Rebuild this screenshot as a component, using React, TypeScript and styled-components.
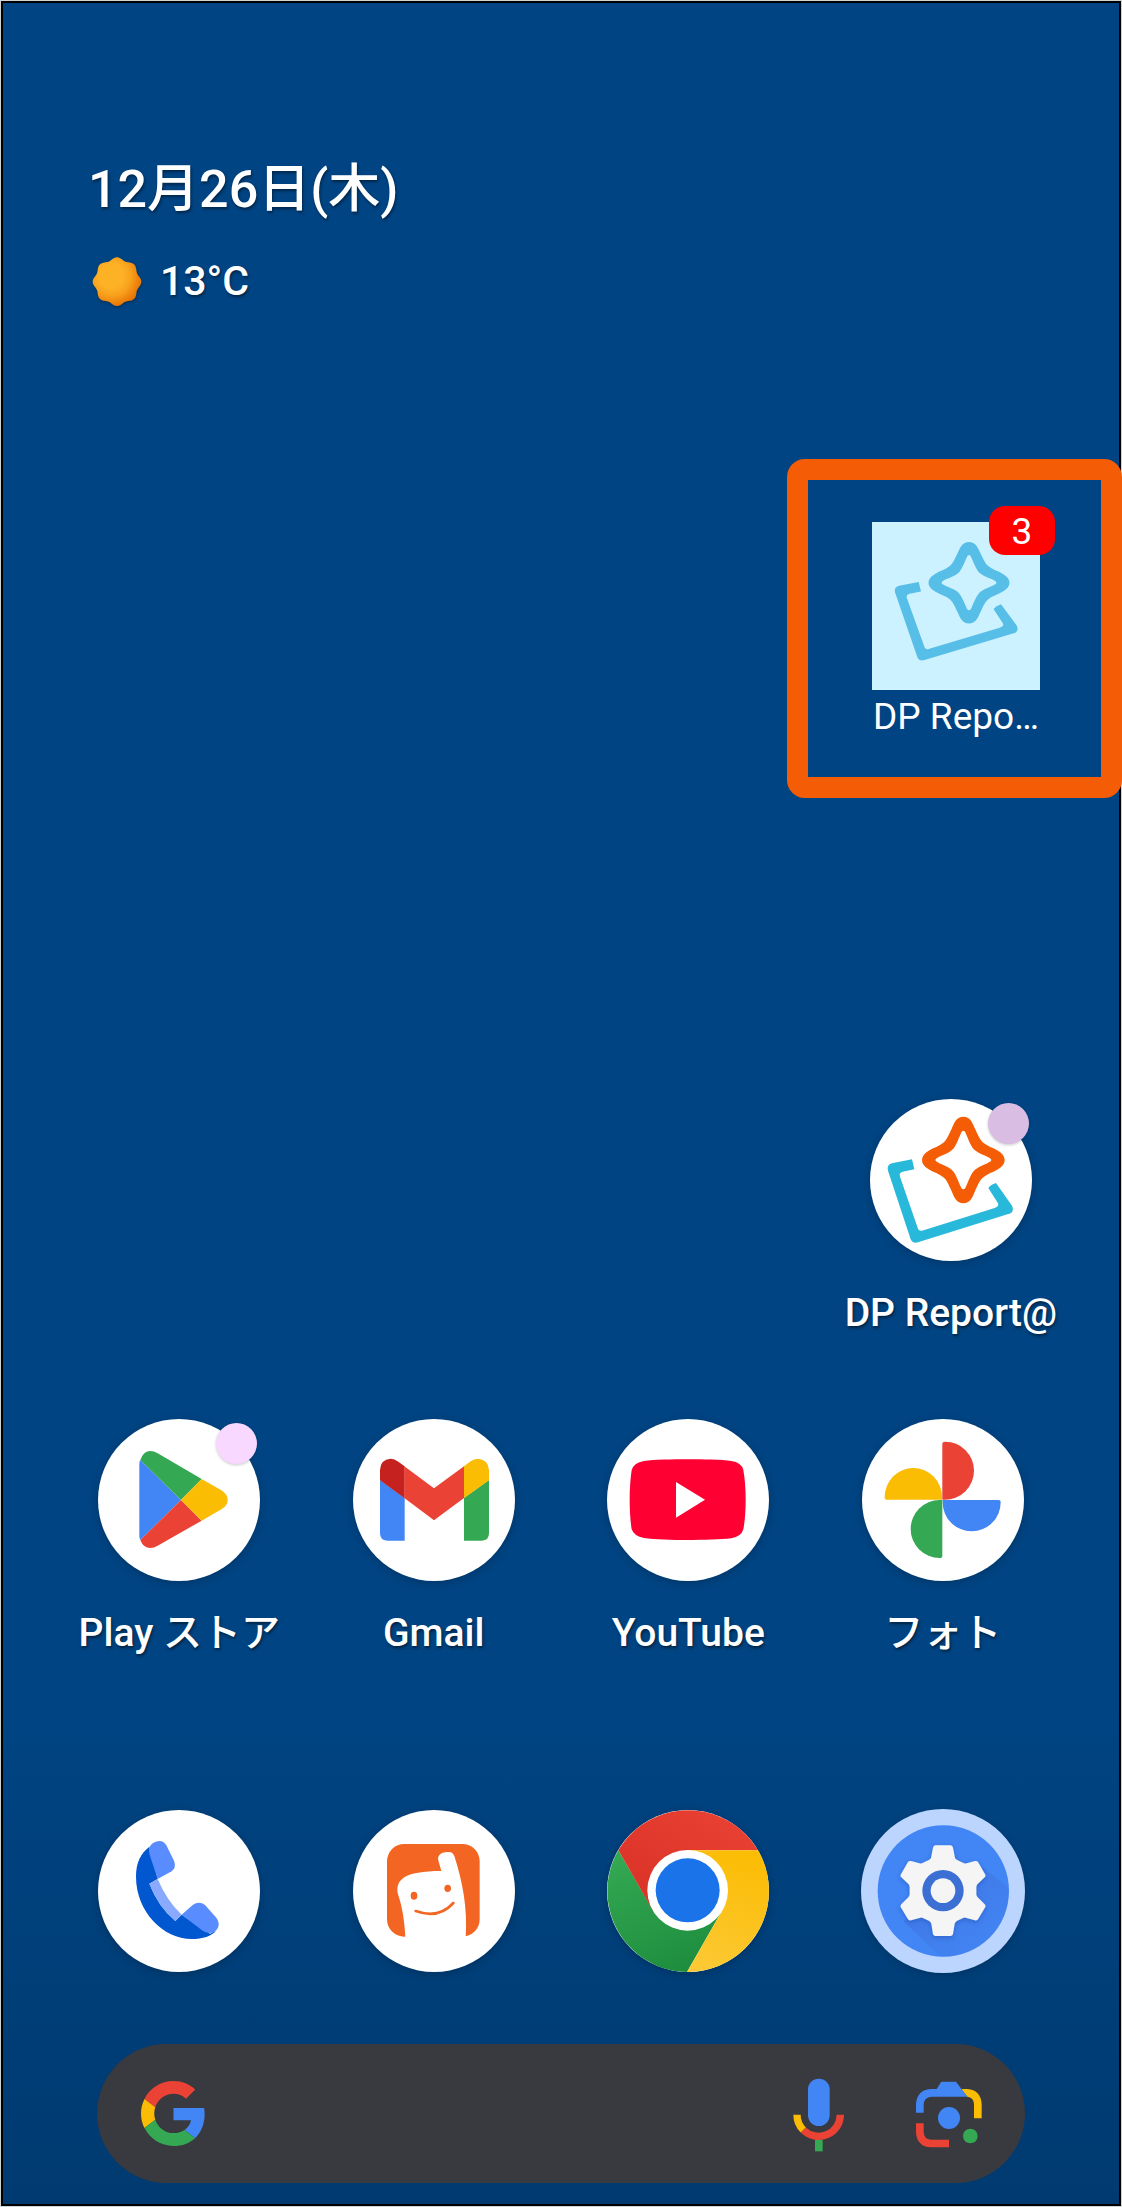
import React from 'react';
import styled, { createGlobalStyle } from 'styled-components';

const ORANGE = '#f45d05';

const GlobalStyle = createGlobalStyle`
  * { box-sizing: border-box; }
  body {
    margin: 0;
    font-family: Roboto, 'Noto Sans CJK JP', sans-serif;
    color: #fff;
  }
  button { border: 0; padding: 0; background: none; font: inherit; color: inherit; cursor: pointer; }
  svg { display: block; overflow: visible; }
`;

const Screen = styled.main`
  display: flex;
  flex-direction: column;
  min-height: 100vh;
  padding: 158px 0 24px;
  background: linear-gradient(#004483 0, #004483 1700px, #003a70 2207px);
  box-shadow: inset 0 0 0 1px #cfd3d1, inset 0 0 0 3px #000;
`;

const Glance = styled.header`
  display: flex;
  flex-direction: column;
  gap: 30px;
  padding: 0 88px;
  font-weight: 500;
  text-shadow: 1px 2px 3px rgba(0, 0, 0, 0.45);
`;

const DateText = styled.time`
  font-size: 52px;
  line-height: 64px;
`;

const Weather = styled.div`
  display: flex;
  align-items: center;
  gap: 16px;
  font-size: 41px;
  line-height: 58px;
`;

const Widget = styled.section`
  display: flex;
  flex-direction: column;
  align-items: center;
  align-self: flex-end;
  width: 335px;
  height: 339px;
  margin-top: 149px;
  padding: 42px 0 0 3px;
  border: 21px solid ${ORANGE};
  border-radius: 18px;
`;

const WidgetButton = styled.button`
  display: flex;
  flex-direction: column;
  gap: 5px;
  width: 168px;
  text-align: center;
`;

const WidgetTile = styled.span`
  position: relative;
  width: 168px;
  height: 168px;
  background: #cdf2ff;
`;

const CountBadge = styled.span`
  position: absolute;
  top: -16px;
  right: -15px;
  width: 66px;
  height: 49px;
  border-radius: 16px;
  background: #f00;
  font-size: 37px;
  line-height: 52px;
  text-align: center;
`;

const WidgetLabel = styled.span`
  font-size: 37px;
  line-height: 44px;
  white-space: nowrap;
`;

const AppRow = styled.div<{ $top: number; $shift?: number }>`
  display: grid;
  grid-template-columns: repeat(4, 1fr);
  justify-items: center;
  margin-top: ${(p) => p.$top}px;
  padding: 0 ${(p) => 52 - (p.$shift ?? 0)}px 0 ${(p) => 52 + (p.$shift ?? 0)}px;
`;

const AppButton = styled.button<{ $column?: number }>`
  display: flex;
  flex-direction: column;
  align-items: center;
  gap: 28px;
  grid-column: ${(p) => p.$column ?? 'auto'};
`;

const Disc = styled.span`
  position: relative;
  width: 162px;
  height: 162px;
  border-radius: 50%;
  background: #fff;
  box-shadow: 0 2px 8px rgba(0, 0, 0, 0.22);
`;

const Dot = styled.span<{ $color: string }>`
  position: absolute;
  top: 4px;
  right: 3px;
  width: 41px;
  height: 41px;
  border-radius: 50%;
  background: ${(p) => p.$color};
  box-shadow: 0 1px 3px rgba(0, 0, 0, 0.22);
`;

const AppLabel = styled.span`
  font-size: 39px;
  font-weight: 500;
  line-height: 48px;
  white-space: nowrap;
  text-shadow: 1px 2px 3px rgba(0, 0, 0, 0.5);
`;

const SearchBar = styled.form`
  display: flex;
  align-items: center;
  gap: 52px;
  height: 139px;
  margin: 72px 97px 0;
  padding: 0 37px 0 44px;
  border-radius: 70px;
  background: #393a3f;
`;

const SearchInput = styled.input`
  flex: 1;
  min-width: 0;
  height: 78px;
  border: 0;
  outline: 0;
  background: none;
  color: #fff;
  font: inherit;
  font-size: 39px;
`;

const STAR_OUTER =
  'M432 110C452 110 459 127 466 144C476 165 482 181 492 188C505 199 520 202 536 212C549 220 556 229 556 240C556 251 549 260 536 268C520 278 505 281 492 292C482 299 476 315 466 336C459 353 452 370 432 370C412 370 405 353 398 336C388 315 382 299 372 292C359 281 344 278 328 268C315 260 308 251 308 240C308 229 315 220 328 212C344 202 359 199 372 188C382 181 388 165 398 144C405 127 412 110 432 110Z';
const STAR_INNER =
  'M432 152Q436 152 438 157C447 178 455 202 467 211C480 223 500 226 514 236Q518 240 514 244C500 254 480 258 467 269C455 279 447 304 438 324Q432 332 426 324C417 304 409 279 397 269C384 258 364 254 350 244Q346 240 350 236C364 226 384 223 397 211C409 202 417 178 426 157Q428 152 432 152Z';

const ReportMark = ({ star, frame }: { star: string; frame: string }) => (
  <>
    <path fill={star} fillRule="evenodd" d={STAR_OUTER + STAR_INNER} />
    <path
      fill={frame}
      d="M278 238L285 268L250 275Q238 278 242 290L296 446Q299 454 308 452L526 384Q540 379 536 370L507 324Q514 314 530 309L578 377Q585 392 574 400L296 487Q280 492 274 478L206 272Q201 255 218 250Z"
    />
  </>
);

const WidgetIcon = () => (
  <svg width="168" height="168" viewBox="306 246 504 504" aria-hidden="true">
    <g transform="translate(597 428) scale(.98 .94) translate(-432 -240)">
      <ReportMark star="#57bee7" frame="#57bee7" />
    </g>
  </svg>
);

const Glyph = ({ box, children }: { box: string; children: React.ReactNode }) => (
  <svg width="162" height="162" viewBox={box} aria-hidden="true">
    {children}
  </svg>
);

const ReportIcon = () => (
  <Glyph box="152 57 486 486">
    <ReportMark star={ORANGE} frame="#27b8da" />
  </Glyph>
);

const PlayIcon = () => (
  <Glyph box="114 57 486 486">
    <path fill="#4285f4" d="M238 192Q238 185 241 180L363 300L241 420Q238 415 238 408Z" />
    <path fill="#34a853" d="M241 180Q250 153 271 153Q282 153 293 160L425 237L363 300Z" />
    <path fill="#ea4335" d="M241 420L363 300L425 362L293 437Q282 444 271 444Q250 444 241 420Z" />
    <path fill="#fbbc04" d="M425 237L484 271Q503 283 503 300Q503 317 484 328L425 362L363 300Z" />
  </Glyph>
);

const GmailIcon = () => (
  <Glyph box="69 57 486 486">
    <path fill="#4285f4" d="M150 240L224 294V422H172Q150 422 150 400Z" />
    <path fill="#c5221f" d="M150 241V210Q151 178 182 176Q194 176 205 185L224 199V295Z" />
    <path fill="#ea4335" d="M223 199L312 265L402 199V294L312 361L223 294Z" />
    <path fill="#34a853" d="M477 240V400Q477 422 455 422H402V294Z" />
    <path fill="#fbbc04" d="M402 199L422 184Q432 176 443 176Q475 178 477 210V241L402 294Z" />
  </Glyph>
);

const YouTubeIcon = () => (
  <Glyph box="52 57 486 486">
    <path
      fill="#ff0033"
      d="M294 178C340 178 395 179 425 183Q455 187 461 210Q468 250 468 299Q468 350 461 388Q455 410 425 415C395 419 340 420 294 420C250 420 193 419 163 414Q133 409 126 388Q120 350 120 299Q120 250 126 210Q133 188 163 183C193 179 250 178 294 178Z"
    />
    <path fill="#fff" d="M259 246L346 299L259 353Z" />
  </Glyph>
);

const PhotosIcon = () => (
  <Glyph box="67 57 486 486">
    <path fill="#ea4335" d="M308 299V131Q308 125 316 125A87 87 0 0 1 316 299Z" />
    <path fill="#4285f4" d="M309 300H477Q483 300 483 307A87 87 0 0 1 309 307Z" />
    <path fill="#34a853" d="M308 300V467Q308 474 300 474A87 87 0 0 1 300 300Z" />
    <path fill="#fbbc04" d="M307 299H140Q135 299 135 292A86 88 0 0 1 307 292Z" />
  </Glyph>
);

const PhoneIcon = () => (
  <Glyph box="54 90 486 486">
    <path
      fill="#0057d0"
      d="M208 200C182 220 168 248 168 290C168 395 250 477 335 477C368 477 395 468 408 452L390 461L305 404L286 423Q235 380 208 311L233 297Z"
    />
    <path
      fill="#598dff"
      d="M207 212Q206 199 219 189Q246 174 259 196L282 242Q290 262 275 274L233 297L209 224Z"
    />
    <path
      fill="#598dff"
      d="M305 404L338 375Q357 362 375 375L409 413Q420 428 414 443Q405 459 388 459Q376 459 366 451Z"
    />
    <path fill="#89aaff" d="M208 311L233 297Q260 362 305 404L286 423Q235 380 208 311Z" />
  </Glyph>
);

const FaceIcon = () => (
  <Glyph box="818 90 486 486">
    <rect x="920" y="192" width="278" height="278" rx="52" fill="#f26522" />
    <path
      fill="#fff"
      d="M975 473C973 430 967 384 953 343C944 300 970 273 1083 273C1080 260 1075 248 1073 236Q1074 222 1087 218Q1100 215 1112 217Q1119 220 1122 228C1147 305 1162 385 1156 473Z"
    />
    <ellipse cx="1001" cy="347" rx="10" ry="12" fill="#f26522" />
    <ellipse cx="1102" cy="325" rx="10" ry="11" fill="#f26522" />
    <path d="M1006 393Q1075 418 1119 369" fill="none" stroke="#f26522" strokeWidth="8" strokeLinecap="round" />
  </Glyph>
);

const ChromeIcon = () => (
  <Glyph box="52 90 486 486">
    <defs>
      <linearGradient id="chromeRed" x1="0" y1="1" x2="1" y2="0">
        <stop offset="0" stopColor="#d93025" />
        <stop offset="1" stopColor="#ea4335" />
      </linearGradient>
      <linearGradient id="chromeGreen" x1="0.6" y1="1" x2="0.2" y2="0">
        <stop offset="0" stopColor="#1e8e3e" />
        <stop offset="1" stopColor="#34a853" />
      </linearGradient>
      <linearGradient id="chromeYellow" x1="0.3" y1="1" x2="0.6" y2="0">
        <stop offset="0" stopColor="#fcc934" />
        <stop offset="1" stopColor="#fbbc04" />
      </linearGradient>
    </defs>
    <path fill="url(#chromeGreen)" d="M86 211A243 243 0 0 0 292 576L398 391L294 331L188 388Z" />
    <path fill="url(#chromeRed)" d="M86 211A243 243 0 0 1 505 211L294 211V331L189 391Z" />
    <path fill="url(#chromeYellow)" d="M505 211A243 243 0 0 1 292 576L398 391L294 331V211Z" />
    <circle cx="294" cy="331" r="121" fill="#fff" />
    <circle cx="294" cy="331" r="96" fill="#1a73e8" />
  </Glyph>
);

const SettingsIcon = () => (
  <Glyph box="816 90 486 486">
    <defs>
      <linearGradient id="gearShade" x1="0" y1="0" x2="1" y2="1">
        <stop offset="0" stopColor="#3a5fc8" stopOpacity="0.45" />
        <stop offset="0.8" stopColor="#3a5fc8" stopOpacity="0.05" />
      </linearGradient>
      <filter id="gearShadow" x="-20%" y="-20%" width="140%" height="140%">
        <feDropShadow dx="0" dy="5" stdDeviation="7" floodColor="#1c3f9c" floodOpacity="0.4" />
      </filter>
    </defs>
    <circle cx="1059" cy="333" r="246" fill="#bbd5ff" />
    <circle cx="1060" cy="333" r="197" fill="#4285f4" />
    <path fill="url(#gearShade)" d="M1180 262L1256 325A197 197 0 0 1 1052 530L940 424Z" />
    <path
      filter="url(#gearShadow)"
      fill="#f5f5f5"
      d="M1036 196L1082 196Q1088 197 1089 203L1095 234Q1097 238 1103 241L1122 250Q1126 251 1130 250L1155 243Q1161 242 1164 246L1186 284Q1188 289 1184 292L1162 313Q1159 317 1159 322L1159 343Q1159 348 1163 352L1184 373Q1188 377 1186 381L1164 418Q1161 422 1155 421L1127 413Q1123 412 1119 414L1100 423Q1096 427 1094 431L1089 462Q1088 467 1082 468L1036 468Q1030 467 1029 462L1024 431Q1022 427 1018 423L999 414Q995 412 991 413L963 421Q957 422 954 418L932 381Q930 377 934 373L955 352Q959 348 959 343L959 322Q959 317 956 313L934 292Q930 289 932 284L954 246Q957 242 963 243L988 250Q992 251 996 250L1015 241Q1021 238 1023 234L1029 203Q1030 197 1036 196Z"
    />
    <circle cx="1059" cy="332" r="62" fill="#3b6fd4" />
    <circle cx="1059" cy="332" r="37" fill="#f5f5f5" />
  </Glyph>
);

const sunPath =
  Array.from({ length: 96 }, (_, i) => {
    const a = (i / 96) * Math.PI * 2;
    const r = 69 + 4 * Math.cos(8 * a);
    return `${i ? 'L' : 'M'}${(351 + r * Math.sin(a)).toFixed(1)} ${(542 - r * Math.cos(a)).toFixed(1)}`;
  }).join('') + 'Z';

const SunIcon = () => (
  <svg width="56" height="56" viewBox="264 456 168 168" role="img" aria-label="晴れ">
    <defs>
      <radialGradient id="sun" cx="0.38" cy="0.38" r="0.68">
        <stop offset="0.35" stopColor="#fdb228" />
        <stop offset="0.6" stopColor="#f8a11d" />
        <stop offset="1" stopColor="#e46a00" />
      </radialGradient>
      <filter id="sunShadow" x="-20%" y="-20%" width="140%" height="140%">
        <feDropShadow dx="1" dy="4" stdDeviation="4" floodColor="#000" floodOpacity="0.35" />
      </filter>
    </defs>
    <path d={sunPath} fill="url(#sun)" filter="url(#sunShadow)" />
  </svg>
);

const GoogleIcon = () => (
  <svg width="65" height="65" viewBox="0 0 48 48" aria-hidden="true">
    <path fill="#ea4335" d="M24 9.5c3.54 0 6.71 1.22 9.21 3.6l6.85-6.85C35.9 2.38 30.47 0 24 0 14.62 0 6.51 5.38 2.56 13.22l7.98 6.19C12.43 13.72 17.74 9.5 24 9.5z" />
    <path fill="#4285f4" d="M46.98 24.55c0-1.57-.15-3.09-.38-4.55H24v9.02h12.94c-.58 2.96-2.26 5.48-4.78 7.18l7.73 6c4.51-4.18 7.09-10.36 7.09-17.65z" />
    <path fill="#fbbc05" d="M10.53 28.59c-.48-1.45-.76-2.99-.76-4.59s.27-3.14.76-4.59l-7.98-6.19C.92 16.46 0 20.12 0 24c0 3.88.92 7.54 2.56 10.78l7.97-6.19z" />
    <path fill="#34a853" d="M24 48c6.48 0 11.93-2.13 15.89-5.81l-7.73-6c-2.15 1.45-4.92 2.3-8.16 2.3-6.26 0-11.57-4.22-13.47-9.91l-7.98 6.19C6.51 42.62 14.62 48 24 48z" />
  </svg>
);

const MicIcon = () => (
  <svg width="78" height="78" viewBox="120 163 234 234" aria-hidden="true">
    <rect x="204" y="174" width="65" height="142" rx="32" fill="#4285f4" />
    <path d="M171 282A65 65 0 0 0 190 328" fill="none" stroke="#fbbc04" strokeWidth="22" />
    <path d="M190 328A65 65 0 0 0 301 282" fill="none" stroke="#ea4335" strokeWidth="22" />
    <rect x="225" y="358" width="23" height="34" fill="#34a853" />
  </svg>
);

const LensIcon = () => (
  <svg width="78" height="78" viewBox="510 163 234 234" aria-hidden="true">
    <path fill="#fbbc04" d="M664 205H682Q722 208 725 250V293H702V250Q701 230 682 228Z" />
    <path fill="#4285f4" d="M528 276V250Q531 208 572 205H590L604 183H648L682 228H574Q552 230 551 252V276Z" />
    <path fill="#ea4335" d="M528 308H551V334Q552 356 573 357H627V380H573Q531 377 528 336Z" />
    <circle cx="627" cy="292" r="33" fill="#4285f4" />
    <circle cx="691" cy="346" r="22" fill="#34a853" />
  </svg>
);

type AppItem = { name: string; Icon: () => React.JSX.Element; dot?: string };

const apps: AppItem[] = [
  { name: 'Play ストア', Icon: PlayIcon, dot: '#f8d8ff' },
  { name: 'Gmail', Icon: GmailIcon },
  { name: 'YouTube', Icon: YouTubeIcon },
  { name: 'フォト', Icon: PhotosIcon },
];

const dock: AppItem[] = [
  { name: '電話', Icon: PhoneIcon },
  { name: 'ホーム', Icon: FaceIcon },
  { name: 'Chrome', Icon: ChromeIcon },
  { name: '設定', Icon: SettingsIcon },
];

const Launcher = ({ app, column, labelled = true }: { app: AppItem; column?: number; labelled?: boolean }) => (
  <AppButton type="button" $column={column} aria-label={labelled ? undefined : app.name}>
    <Disc>
      <app.Icon />
      {app.dot && <Dot $color={app.dot} />}
    </Disc>
    {labelled && <AppLabel>{app.name}</AppLabel>}
  </AppButton>
);

export default function App() {
  return (
    <>
      <GlobalStyle />
      <Screen>
        <Glance>
          <DateText dateTime="12-26">12月26日(木)</DateText>
          <Weather>
            <SunIcon />
            <span>13°C</span>
          </Weather>
        </Glance>

        <Widget>
          <WidgetButton type="button">
            <WidgetTile>
              <WidgetIcon />
              <CountBadge>3</CountBadge>
            </WidgetTile>
            <WidgetLabel>DP Repo…</WidgetLabel>
          </WidgetButton>
        </Widget>

        <AppRow $top={301} $shift={8}>
          <Launcher app={{ name: 'DP Report@', Icon: ReportIcon, dot: '#dabde2' }} column={4} />
        </AppRow>
        <AppRow $top={82}>
          {apps.map((app) => (
            <Launcher key={app.name} app={app} />
          ))}
        </AppRow>
        <AppRow $top={153}>
          {dock.map((app) => (
            <Launcher key={app.name} app={app} labelled={false} />
          ))}
        </AppRow>

        <SearchBar role="search" onSubmit={(e) => e.preventDefault()}>
          <GoogleIcon />
          <SearchInput type="text" aria-label="検索" />
          <button type="button" aria-label="音声検索">
            <MicIcon />
          </button>
          <button type="button" aria-label="Google レンズ">
            <LensIcon />
          </button>
        </SearchBar>
      </Screen>
    </>
  );
}
